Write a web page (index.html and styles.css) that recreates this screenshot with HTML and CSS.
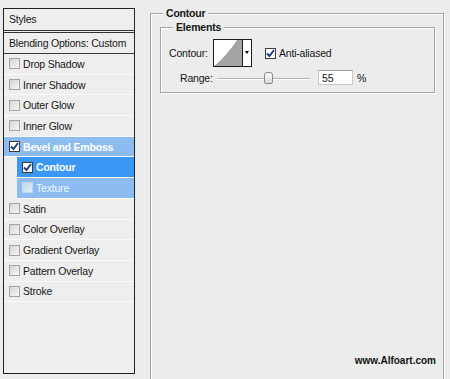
FILE: index.html
```html
<!DOCTYPE html>
<html lang="en">
<head>
  <meta charset="UTF-8" />
  <title>Layer Style - Contour</title>
  <link rel="stylesheet" href="styles.css">
</head>
<body>
  <div class="dialog">
    <!-- Styles list -->
    <div class="styles-panel">
      <div class="panel-title">Styles</div>
      <div class="blend-row">Blending Options: Custom</div>
      <ul class="style-list">
        <li class="style-item"><span class="check"></span>Drop Shadow</li>
        <li class="style-item"><span class="check"></span>Inner Shadow</li>
        <li class="style-item"><span class="check"></span>Outer Glow</li>
        <li class="style-item"><span class="check"></span>Inner Glow</li>
        <li class="style-item is-parent">
          <span class="check is-on"><svg width="9" height="9" viewBox="0 0 9 9"><path d="M1 4.5 L3.5 7 L8 1" /></svg></span>Bevel and Emboss
        </li>
        <li class="style-item is-sub is-selected">
          <span class="check is-on"><svg width="9" height="9" viewBox="0 0 9 9"><path d="M1 4.5 L3.5 7 L8 1" /></svg></span>Contour
        </li>
        <li class="style-item is-sub is-dim"><span class="check"></span>Texture</li>
        <li class="style-item"><span class="check"></span>Satin</li>
        <li class="style-item"><span class="check"></span>Color Overlay</li>
        <li class="style-item"><span class="check"></span>Gradient Overlay</li>
        <li class="style-item"><span class="check"></span>Pattern Overlay</li>
        <li class="style-item"><span class="check"></span>Stroke</li>
      </ul>
    </div>

    <!-- Contour settings -->
    <div class="group outer-group">
      <span class="group-label">Contour</span>
      <div class="group inner-group">
        <span class="group-label">Elements</span>
        <div class="field-row">
          <span class="field-label">Contour:</span>
          <div class="contour-picker">
            <svg class="contour-curve" width="28" height="26" viewBox="0 0 28 26">
              <path d="M0 26 C 9 19, 17 9, 23 0 L 28 0 L 28 26 Z" />
            </svg>
            <span class="picker-arrow"></span>
          </div>
          <span class="check is-on aa-check"><svg width="9" height="9" viewBox="0 0 9 9"><path d="M1 4.5 L3.5 7 L8 1" /></svg></span>
          <span class="aa-label">Anti-aliased</span>
        </div>
        <div class="field-row range-row">
          <span class="range-label">Range:</span>
          <div class="slider"><span class="slider-thumb"></span></div>
          <input class="num-input" type="text" value="55" />
          <span class="unit">%</span>
        </div>
      </div>
      <div class="watermark">www.Alfoart.com</div>
    </div>
  </div>
</body>
</html>
```

FILE: styles.css
```css
* {
  box-sizing: border-box;
}
body {
  margin: 0;
  background: #ececec;
  font-family: "Liberation Sans", Arial, sans-serif;
  font-size: 10.5px;
  letter-spacing: -0.2px;
  color: #161616;
}
.dialog {
  display: flex;
  align-items: flex-start;
  height: 379px;
  padding: 8px 0 0 3px;
  overflow: hidden;
}

/* left list */
.styles-panel {
  width: 132px;
  height: 366px;
  border: 1px solid #222;
  background: #eeeeee;
  flex-shrink: 0;
}
.panel-title {
  height: 24px;
  line-height: 20px;
  padding-left: 5px;
  border-bottom: 3px double #333;
}
.blend-row {
  height: 21px;
  line-height: 20px;
  padding-left: 5px;
  border-bottom: 1px solid #3a3a3a;
}
.style-list {
  list-style: none;
  margin: 0;
  padding: 0;
}
.style-item {
  display: flex;
  align-items: center;
  gap: 3px;
  height: 20.7px;
  padding-left: 5px;
  border-bottom: 1px solid #fafafa;
}
.style-item.is-parent {
  background: #8dbdf0;
  color: #fff;
  font-weight: bold;
}
.style-item.is-sub {
  margin-left: 13px;
  color: #fff;
}
.style-item.is-selected {
  background: #3a97f4;
  font-weight: bold;
}
.style-item.is-dim {
  background: #8dbdf0;
  color: #eef5fd;
}
.check {
  display: inline-flex;
  align-items: center;
  justify-content: center;
  width: 11px;
  height: 11px;
  border: 1px solid #a4a4a4;
  background: linear-gradient(135deg, #d6d6d6, #f6f6f6);
  flex-shrink: 0;
}
.check.is-on {
  border-color: #3c3c3c;
  background: #fff;
}
.check svg path {
  fill: none;
  stroke: #1e3c78;
  stroke-width: 1.9;
}
.is-dim .check {
  border-color: #c4d8ee;
  background: linear-gradient(135deg, #bcd3ec, #e4edf7);
}

/* right group boxes */
.group {
  position: relative;
  border: 1px solid #a6a6a6;
  box-shadow: inset 1px 1px 0 #fff, 1px 1px 0 #fff;
}
.group-label {
  position: absolute;
  top: -7px;
  left: 12px;
  padding: 0 3px;
  background: #ececec;
  font-weight: bold;
  line-height: 13px;
}
.outer-group {
  display: flex;
  flex-direction: column;
  width: 294px;
  height: 380px;
  margin: 5px 0 0 15px;
  padding: 13px 0 0 9px;
  flex-shrink: 0;
}
.inner-group {
  width: 275px;
  height: 66px;
  padding: 11px 0 0 8px;
}
.field-row {
  display: flex;
  align-items: center;
  height: 28px;
}
.field-label {
  width: 44px;
}
.contour-picker {
  display: flex;
  width: 39px;
  height: 28px;
  border: 1px solid #1c1c1c;
  background: #fff;
}
.contour-curve {
  display: block;
}
.contour-curve path {
  fill: #a4a4a4;
}
.picker-arrow {
  position: relative;
  flex: 1;
  border-left: 1px solid #1c1c1c;
}
.picker-arrow::after {
  content: "";
  position: absolute;
  top: 11px;
  left: 2px;
  border-left: 2.5px solid transparent;
  border-right: 2.5px solid transparent;
  border-top: 3px solid #000;
}
.aa-check {
  margin-left: 13px;
}
.aa-label {
  margin-left: 3px;
}
.range-row {
  height: 15px;
  margin-top: 3px;
  padding-left: 11px;
}
.range-label {
  width: 37px;
}
.slider {
  position: relative;
  width: 93px;
  height: 15px;
}
.slider::before {
  content: "";
  position: absolute;
  left: 0;
  right: 0;
  top: 8px;
  height: 1px;
  background: #b4b4b4;
  box-shadow: 0 1px 0 #fff;
}
.slider-thumb {
  position: absolute;
  left: 47px;
  top: 2px;
  width: 9px;
  height: 12px;
  border: 1px solid #8a8a8a;
  border-radius: 3px 3px 2px 2px;
  background: linear-gradient(#fdfdfd, #d8d8d8);
}
.num-input {
  width: 35px;
  height: 15px;
  margin-left: 8px;
  padding: 0 3px;
  border: 1px solid #c8c8c8;
  border-top-color: #9c9c9c;
  background: #fff;
  font: inherit;
  color: inherit;
}
.unit {
  margin-left: 4px;
}
.watermark {
  margin: auto 7px 26px 0;
  align-self: flex-end;
  font-size: 10px;
  font-weight: bold;
  letter-spacing: 0;
  color: #111;
}
```
